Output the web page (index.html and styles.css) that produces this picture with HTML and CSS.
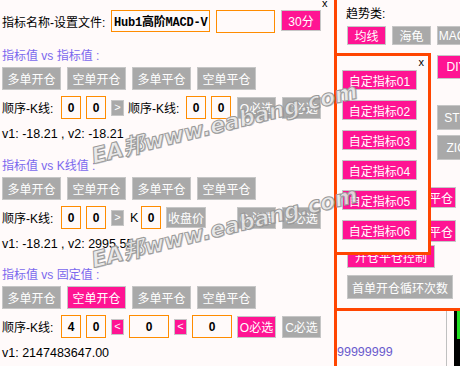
FILE: index.html
```html
<!DOCTYPE html>
<html>
<head>
<meta charset="utf-8">
<link rel="stylesheet" href="styles.css">
</head>
<body>
<div class="app">
  <div class="left">
    <div class="toprow">
      <span class="lbl name">指标名称-设置文件:</span>
      <span class="inp file">Hub1高阶MACD-V</span>
      <span class="inp blank"></span>
      <span class="btn pink tf">30分</span>
    </div>

    <section class="sec s1">
      <div class="title">指标值 vs 指标值 :</div>
      <div class="btnrow">
        <span class="btn gray op">多单开仓</span>
        <span class="btn gray op">空单开仓</span>
        <span class="btn gray op">多单平仓</span>
        <span class="btn gray op">空单平仓</span>
      </div>
      <div class="inrow">
        <span class="lbl k">顺序-K线:</span>
        <span class="inp n">0</span>
        <span class="inp n ml5">0</span>
        <span class="btn gray sm ml5">&gt;</span>
        <span class="lbl k2">顺序-K线:</span>
        <span class="inp n">0</span>
        <span class="inp n ml5">0</span>
        <span class="btn gray must ml6">O必选</span>
        <span class="btn gray must ml6">C必选</span>
      </div>
      <div class="val">v1: -18.21 , v2: -18.21</div>
    </section>

    <section class="sec s2">
      <div class="title">指标值 vs K线值 :</div>
      <div class="btnrow">
        <span class="btn gray op">多单开仓</span>
        <span class="btn gray op">空单开仓</span>
        <span class="btn gray op">多单平仓</span>
        <span class="btn gray op">空单平仓</span>
      </div>
      <div class="inrow">
        <span class="lbl k">顺序-K线:</span>
        <span class="inp n">0</span>
        <span class="inp n ml5">0</span>
        <span class="btn gray sm ml5">&gt;</span>
        <span class="lbl kk">K</span>
        <span class="inp n">0</span>
        <span class="btn gray close-price ml5">收盘价</span>
        <span class="btn gray must ml31">O必选</span>
        <span class="btn gray must ml6">C必选</span>
      </div>
      <div class="val">v1: -18.21 , v2: 2995.55</div>
    </section>

    <section class="sec s3">
      <div class="title">指标值 vs 固定值 :</div>
      <div class="btnrow">
        <span class="btn gray op">多单开仓</span>
        <span class="btn pink op">空单开仓</span>
        <span class="btn gray op">多单平仓</span>
        <span class="btn gray op">空单平仓</span>
      </div>
      <div class="inrow">
        <span class="lbl k">顺序-K线:</span>
        <span class="inp n">4</span>
        <span class="inp n ml5">0</span>
        <span class="btn pink sm ml5">&lt;</span>
        <span class="inp wide ml5">0</span>
        <span class="btn pink sm ml5">&lt;</span>
        <span class="inp wide ml5">0</span>
        <span class="btn pink must ml5">O必选</span>
        <span class="btn gray must ml6">C必选</span>
      </div>
      <div class="val">v1: 2147483647.00</div>
    </section>
  </div>

  <div class="right">
    <div class="rtop">
      <div class="rlabel">趋势类:</div>
      <div class="rbtns">
        <span class="btn pink rb">均线</span>
        <span class="btn gray rb ml6">海龟</span>
        <span class="btn gray rb ml6">MACD</span>
      </div>
      <div class="rrow r-di"><span class="btn pink rc">DIY</span></div>
      <div class="rrow r-st"><span class="btn gray rc">STO</span></div>
      <div class="rrow r-zi"><span class="btn gray rc">ZIG</span></div>
      <div class="rrow r-p1"><span class="btn pink wideclose">多单一键平仓</span></div>
      <div class="rrow r-p2"><span class="btn pink wideclose">空单一键平仓</span></div>
      <div class="rrow r-ctl"><span class="btn pink ctl">开仓平仓控制</span></div>
      <div class="rrow r-loop"><span class="btn gray loop">首单开仓循环次数</span></div>
    </div>
    <div class="rbottom">
      <div class="rvals">99999999</div>
      <div class="rgap"></div>
      <div class="rbar"><div class="rbar-g"></div></div>
    </div>
  </div>

  <div class="popup">
    <span class="close pclose">x</span>
    <span class="btn pink pb">自定指标01</span>
    <span class="btn pink pb">自定指标02</span>
    <span class="btn pink pb">自定指标03</span>
    <span class="btn pink pb">自定指标04</span>
    <span class="btn pink pb">自定指标05</span>
    <span class="btn pink pb">自定指标06</span>
  </div>

  <span class="close mclose">x</span>

  <span class="wm wm1">EA邦www.eabang.com</span>
  <span class="wm wm2">EA邦www.eabang.com</span>
</div>
</body>
</html>
```

FILE: styles.css
```css
* { box-sizing: border-box; }

html, body {
  margin: 0;
  padding: 0;
  background: #fffafa;
}

body {
  font-family: "Liberation Sans", "Noto Sans CJK SC", sans-serif;
  font-size: 12px;
  color: #000;
}

.app {
  position: relative;
  width: 460px;
  height: 366px;
  display: flex;
  overflow: hidden;
  background: #fffafa;
}

/* ---------- left panel ---------- */
.left {
  width: 334px;
  flex: none;
  display: flex;
  flex-direction: column;
}

.toprow {
  margin-top: 10px;
  height: 23px;
  padding-left: 2px;
  display: flex;
  align-items: flex-start;
}

.lbl {
  display: flex;
  align-items: center;
  white-space: nowrap;
  height: 22px;
}

.name { width: 109px; height: 22px; }

.inp {
  display: flex;
  align-items: center;
  justify-content: center;
  border: 1px solid #ff8c00;
  background: #fffafa;
  font-weight: bold;
  font-size: 12px;
  height: 23px;
  white-space: nowrap;
  overflow: hidden;
}

.file {
  width: 99px;
  height: 22px;
  justify-content: flex-start;
  padding-left: 2px;
  font-family: "Liberation Mono", "Noto Sans CJK SC", monospace;
  letter-spacing: -0.2px;
}

.blank { width: 59px; margin-left: 6px; }

.btn {
  display: flex;
  align-items: center;
  justify-content: center;
  color: #fff;
  border: 1px solid #c6c6c6;
  white-space: nowrap;
  overflow: hidden;
  flex: none;
}

.gray { background: #a9a9a9; }
.pink { background: #ff1493; }

.tf { width: 40px; height: 21px; margin-left: 6px; }

.sec {
  display: flex;
  flex-direction: column;
}
.s1 { margin-top: 15px; }
.s2 { margin-top: 17px; }
.s3 { margin-top: 16px; }

.title {
  height: 16px;
  line-height: 16px;
  padding-left: 2px;
  color: #7b68ee;
  white-space: nowrap;
}

.btnrow {
  margin-top: 3px;
  padding-left: 2px;
  display: flex;
  gap: 6px;
}

.op { width: 59px; height: 23px; }

.inrow {
  margin-top: 6px;
  height: 23px;
  padding-left: 2px;
  display: flex;
  align-items: center;
}

.k { width: 59px; }
.k2 { width: 58px; margin-left: 4px; }
.kk { width: 11px; margin-left: 6px; font-size: 12.5px; }

.n { width: 20px; }
.wide { width: 40px; }

.sm {
  width: 13px;
  height: 16px;
  font-size: 11px;
  line-height: 1;
}

.must { width: 39px; height: 22px; }
.close-price { width: 40px; height: 21px; }

.ml5 { margin-left: 5px; }
.ml6 { margin-left: 6px; }
.ml31 { margin-left: 31px; }

.val {
  margin-top: 8px;
  height: 14px;
  line-height: 14px;
  padding-left: 2px;
  font-size: 12.5px;
  white-space: nowrap;
}

/* ---------- right panel ---------- */
.right {
  flex: 1;
  min-width: 0;
  border-left: 3px solid #ff4500;
  display: flex;
  flex-direction: column;
}

.rtop {
  height: 311px;
  flex: none;
  border-bottom: 3px solid #ff4500;
  padding-left: 10px;
  display: flex;
  flex-direction: column;
}

.rlabel {
  margin-top: 6px;
  height: 16px;
  line-height: 16px;
  margin-left: -1px;
}

.rbtns {
  margin-top: 4px;
  display: flex;
}

.rb { width: 39px; height: 19px; }

.rrow { display: flex; }

.rc { width: 39px; margin-left: 90px; }

.r-di { margin-top: 10px; }
.r-di .rc { height: 24px; }
.r-st { margin-top: 26px; }
.r-st .rc { height: 25px; }
.r-zi { margin-top: 5px; }
.r-zi .rc { height: 25px; }

.wideclose {
  width: 109px;
  justify-content: flex-end;
  padding-right: 2px;
}
.r-p1 { margin-top: 27px; }
.r-p1 .wideclose { height: 21px; }
.r-p2 { margin-top: 12px; }
.r-p2 .wideclose { height: 22px; }

.r-ctl { margin-top: 3px; }
.ctl { width: 88px; height: 23px; }

.r-loop { margin-top: 7px; }
.loop { width: 106px; height: 24px; }

.rbottom {
  flex: 1;
  display: flex;
}

.rvals {
  width: 110px;
  border-right: 1px solid #c0c0c0;
  padding-top: 34px;
  line-height: 14px;
  font-size: 12.5px;
  color: #6a5acd;
  white-space: nowrap;
}

.rgap { width: 7px; }

.rbar {
  width: 6px;
  background: #000;
}
.rbar-g {
  margin-left: 3px;
  width: 3px;
  height: 28px;
  background: #22e022;
}

/* ---------- popup ---------- */
.popup {
  position: absolute;
  left: 334px;
  top: 53px;
  width: 97px;
  height: 202px;
  border: 3px solid #ff4500;
  background: #fffafa;
  display: flex;
  flex-direction: column;
  gap: 10px;
  padding: 14px 0 0 5px;
}

.pb { width: 75px; height: 20px; }

.close {
  position: absolute;
  font-size: 11px;
  line-height: 11px;
  color: #000;
}
.pclose { top: 1px; right: 4px; }
.mclose { left: 322px; top: -2px; }

/* ---------- watermark ---------- */
.wm {
  position: absolute;
  left: 92px;
  font-family: "DejaVu Sans", "Noto Sans CJK SC", sans-serif;
  font-size: 22px;
  font-weight: bold;
  font-style: italic;
  line-height: 26px;
  white-space: nowrap;
  color: rgba(238, 238, 238, 0.85);
  -webkit-text-stroke: 1px #9a9a9a;
  text-shadow: 1px 1px 0 rgba(110, 110, 110, 0.35);
  transform-origin: left center;
  transform: rotate(-14deg);
  pointer-events: none;
}
.wm1 { top: 144px; }
.wm2 { top: 248px; }
```
